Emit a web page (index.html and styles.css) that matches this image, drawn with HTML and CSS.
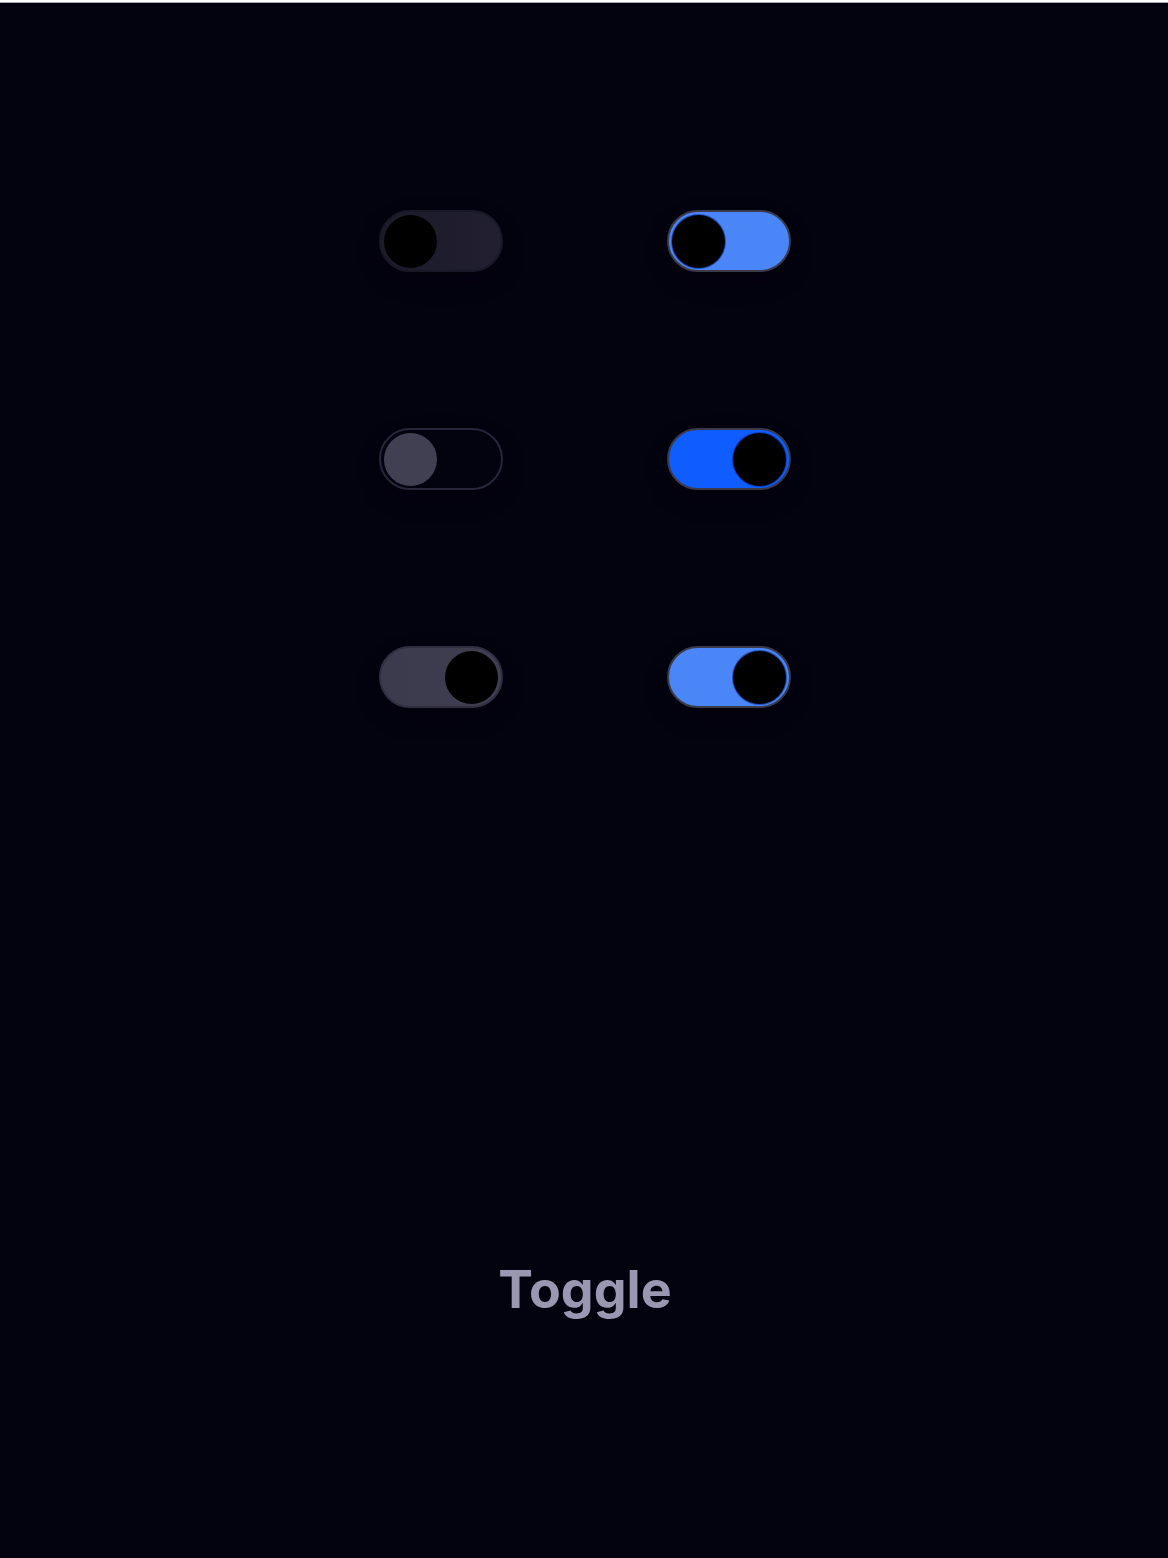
FILE: index.html
```html
<!DOCTYPE html>
<html>
<head>
<meta charset="utf-8">
<link rel="stylesheet" href="styles.css">
</head>
<body>
<div class="topbar"></div>
<main class="page">
  <div class="grid">
    <div class="toggle off-filled"><span class="knob"></span></div>
    <div class="toggle on-light left"><span class="knob"></span></div>
    <div class="toggle off-outline"><span class="knob grey"></span></div>
    <div class="toggle on-bright right"><span class="knob"></span></div>
    <div class="toggle off-grey right"><span class="knob"></span></div>
    <div class="toggle on-light right"><span class="knob"></span></div>
  </div>
  <h1 class="title">Toggle</h1>
</main>
</body>
</html>
```

FILE: styles.css
```css
html, body {
  margin: 0;
  padding: 0;
  background: #03020f;
  height: 100%;
}
.topbar {
  height: 2px;
  background: #ffffff;
  border-bottom: 1px solid #a8a8b0;
}
.page {
  display: flex;
  flex-direction: column;
  align-items: center;
  padding-top: 207px;
  padding-left: 2px;
}
.grid {
  display: grid;
  grid-template-columns: 124px 124px;
  column-gap: 164px;
  row-gap: 156px;
}
.toggle {
  width: 124px;
  height: 62px;
  box-sizing: border-box;
  border-radius: 31px;
  border: 2px solid #1a1928;
  display: flex;
  align-items: center;
  padding: 0 3px;
  box-shadow: 0 10px 24px rgba(0,0,0,0.2);
}
.toggle.right { justify-content: flex-end; }
.knob {
  width: 53px;
  height: 53px;
  border-radius: 50%;
  background: #000;
  display: block;
}
.knob.grey { background: #413f52; }
.off-filled {
  background: linear-gradient(90deg, #1c1b2a, #211f30);
  border-color: #191826;
}
.off-outline {
  background: #03020f;
  border-color: #27263a;
}
.off-grey {
  background: linear-gradient(90deg, #3c3b4d, #3f3e52);
  border-color: #302f40;
}
.on-light {
  background: #4a86f8;
  border-color: #3a3a4b;
}
.on-light .knob { box-shadow: 0 0 0 1px #1f4fb8; }
.on-bright {
  background: #0f5cff;
  border-color: #3a3a4b;
}
.on-bright .knob { box-shadow: 0 0 0 1px #0a3ec0; }
.title {
  margin: 552px 0 0;
  font-family: "Inter", "Liberation Sans", sans-serif;
  font-weight: 700;
  font-size: 52px;
  line-height: 60px;
  color: #9a98b0;
  letter-spacing: 0;
}
```
